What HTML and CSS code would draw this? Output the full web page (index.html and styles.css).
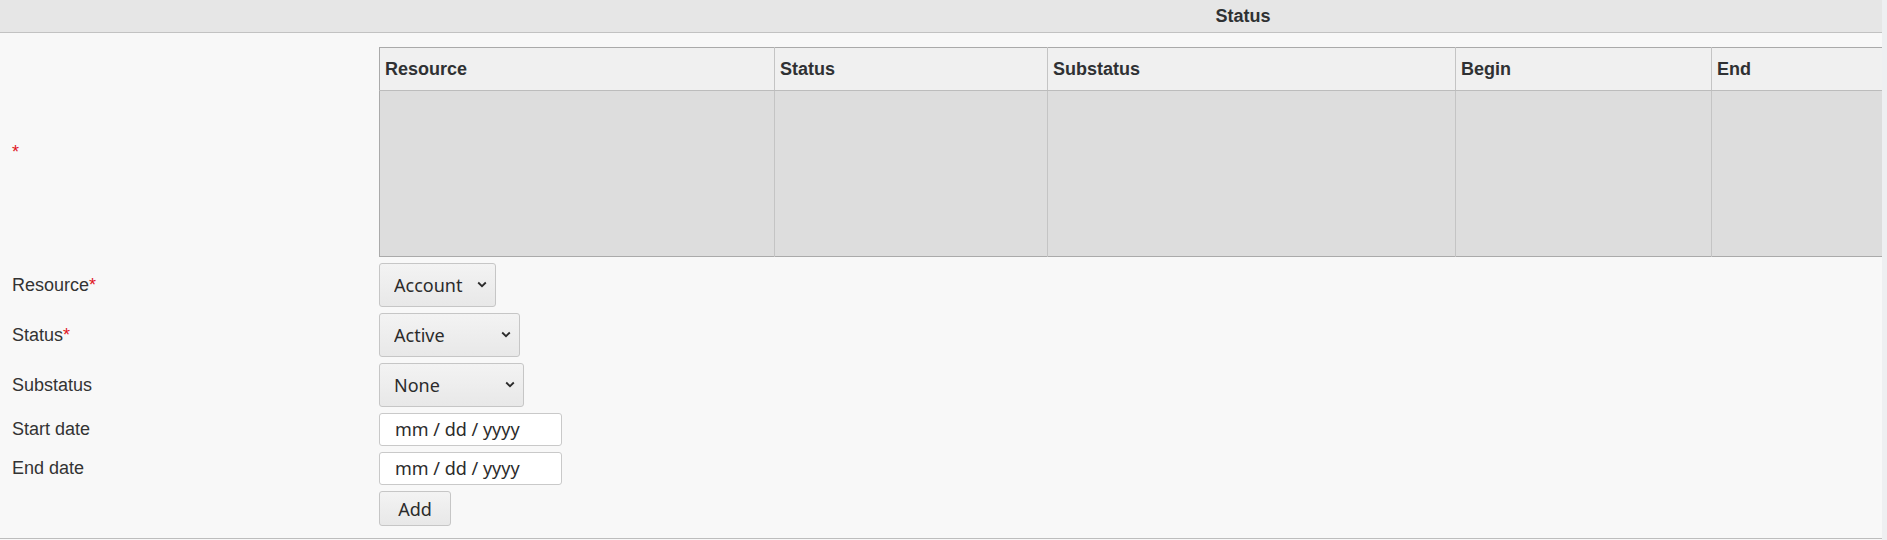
FILE: index.html
```html
<!DOCTYPE html>
<html>
<head>
<meta charset="utf-8">
<title>Status</title>
<link rel="stylesheet" href="styles.css">
</head>
<body>
<div class="page">
  <div class="panel">
    <div class="titlebar">Status</div>
    <div class="form">
      <div class="label"><span class="req">*</span></div>
      <div class="field">
        <table class="grid">
          <colgroup>
            <col class="c-res"><col class="c-status"><col class="c-sub"><col class="c-begin"><col class="c-end">
          </colgroup>
          <thead>
            <tr><th>Resource</th><th>Status</th><th>Substatus</th><th>Begin</th><th>End</th></tr>
          </thead>
          <tbody>
            <tr><td></td><td></td><td></td><td></td><td></td></tr>
          </tbody>
        </table>
      </div>

      <div class="label">Resource<span class="req">*</span></div>
      <div class="field">
        <div class="select-wrap w-account">
          <select class="select"><option>Account</option></select>
          <svg class="chev" width="10" height="7" viewBox="0 0 10 7"><path d="M1.2 1.5 L5 5.2 L8.8 1.5" fill="none" stroke="#2b2b2b" stroke-width="1.8"/></svg>
        </div>
      </div>

      <div class="label">Status<span class="req">*</span></div>
      <div class="field">
        <div class="select-wrap w-status">
          <select class="select"><option>Active</option></select>
          <svg class="chev" width="10" height="7" viewBox="0 0 10 7"><path d="M1.2 1.5 L5 5.2 L8.8 1.5" fill="none" stroke="#2b2b2b" stroke-width="1.8"/></svg>
        </div>
      </div>

      <div class="label">Substatus</div>
      <div class="field">
        <div class="select-wrap w-sub">
          <select class="select"><option>None</option></select>
          <svg class="chev" width="10" height="7" viewBox="0 0 10 7"><path d="M1.2 1.5 L5 5.2 L8.8 1.5" fill="none" stroke="#2b2b2b" stroke-width="1.8"/></svg>
        </div>
      </div>

      <div class="label">Start date</div>
      <div class="field"><input class="date" type="text" placeholder="mm / dd / yyyy"></div>

      <div class="label">End date</div>
      <div class="field"><input class="date" type="text" placeholder="mm / dd / yyyy"></div>

      <div class="label"></div>
      <div class="field"><button class="btn" type="button">Add</button></div>
    </div>
  </div>
</div>
</body>
</html>
```
FILE: styles.css
```css
html, body {
  margin: 0;
  padding: 0;
}
body {
  background: #eeeff1;
  font-family: "Liberation Sans", Arial, sans-serif;
  font-size: 18px;
  color: #333;
}
.page {
  width: 1882px;
  height: 540px;
  overflow: hidden;
  background: #f8f8f8;
}
.panel {
  width: 2486px;
}
.titlebar {
  height: 32px;
  line-height: 32px;
  background: #e6e6e6;
  border-bottom: 1px solid #c2c2c2;
  text-align: center;
  font-weight: bold;
  font-size: 18px;
  color: #2f3133;
}
.form {
  display: grid;
  grid-template-columns: 379px auto;
  align-items: center;
  row-gap: 6px;
  padding: 14px 0 12px;
  border-bottom: 1px solid #bdbdbd;
}
.label {
  padding-left: 12px;
  color: #333;
}
.req {
  color: #e0141e;
}
.field {
  display: flex;
  align-items: center;
}
.grid {
  border-collapse: collapse;
  table-layout: fixed;
  width: 1732px;
  border: 1px solid #aaaaaa;
}
.c-res { width: 395px; }
.c-status { width: 273px; }
.c-sub { width: 408px; }
.c-begin { width: 256px; }
.c-end { width: 400px; }
.grid th {
  height: 42px;
  padding: 0 5px;
  text-align: left;
  font-weight: bold;
  font-size: 18px;
  color: #2f3133;
  background: #f0f0f0;
  border-left: 1px solid #c4c4c4;
  border-bottom: 1px solid #bcbcbc;
}
.grid td {
  height: 165px;
  padding: 0;
  background: #dddddd;
  border-left: 1px solid #c4c4c4;
}
.grid th:first-child, .grid td:first-child {
  border-left: 1px solid #aaaaaa;
}
.select-wrap {
  position: relative;
  display: flex;
}
.select {
  appearance: none;
  -webkit-appearance: none;
  box-sizing: border-box;
  width: 100%;
  height: 44px;
  margin: 0;
  padding: 0 28px 0 14px;
  border: 1px solid #c6c6c6;
  border-radius: 3px;
  background: linear-gradient(#f3f3f3, #e8e8e8);
  font-family: "Noto Sans", "Open Sans", sans-serif;
  font-size: 18px;
  color: #2b2b2b;
}
.chev {
  position: absolute;
  right: 9px;
  top: 18px;
  pointer-events: none;
}
.w-account { width: 117px; }
.w-status { width: 141px; }
.w-sub { width: 145px; }
.date {
  box-sizing: border-box;
  width: 183px;
  height: 33px;
  margin: 0;
  padding: 0 0 2px 15px;
  border: 1px solid #c9c9c9;
  border-radius: 3px;
  background: #ffffff;
  font-family: "Noto Sans", "Open Sans", sans-serif;
  font-size: 18px;
  color: #2b2b2b;
}
.date::placeholder {
  color: #2b2b2b;
  opacity: 1;
}
.btn {
  box-sizing: border-box;
  width: 72px;
  height: 35px;
  margin: 0;
  padding: 0;
  border: 1px solid #c6c6c6;
  border-radius: 3px;
  background: linear-gradient(#f3f3f3, #e8e8e8);
  font-family: "Noto Sans", "Open Sans", sans-serif;
  font-size: 18px;
  color: #2b2b2b;
}
```
